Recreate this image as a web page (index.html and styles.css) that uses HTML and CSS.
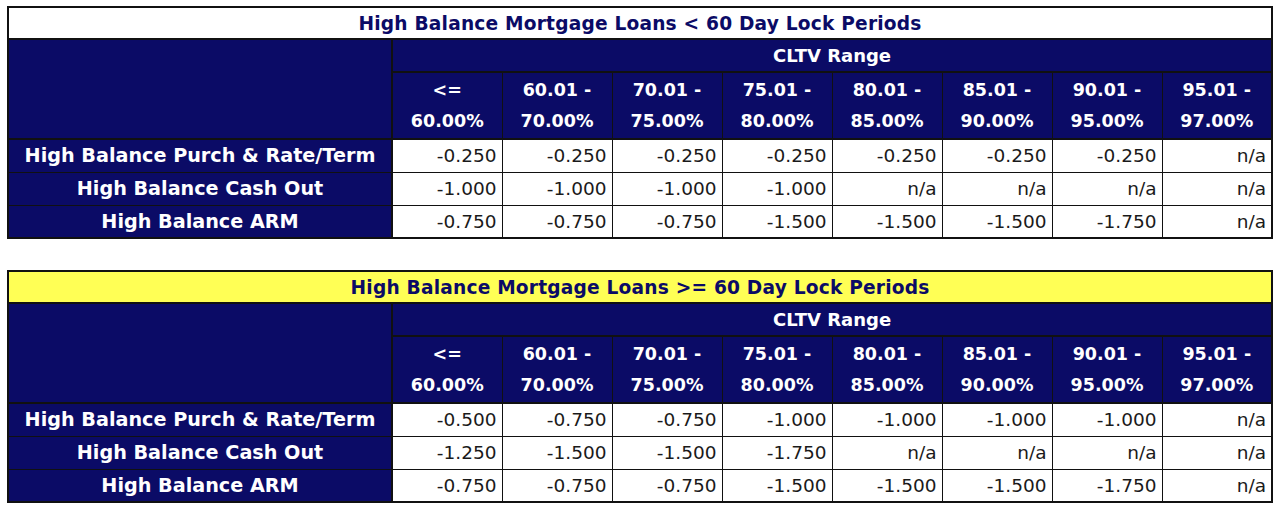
FILE: index.html
```html
<!DOCTYPE html>
<html>
<head>
<meta charset="utf-8">
<link rel="stylesheet" href="styles.css">
</head>
<body>
<div class="page">
  <table class="grid">
    <colgroup><col class="c-label"><col class="c-val"><col class="c-val"><col class="c-val"><col class="c-val"><col class="c-val"><col class="c-val"><col class="c-val"><col class="c-val"></colgroup>
    <tr class="r-title"><th colspan="9" class="title">High Balance Mortgage Loans &lt; 60 Day Lock Periods</th></tr>
    <tr class="r-range"><th rowspan="2" class="corner"></th><th colspan="8" class="range">CLTV Range</th></tr>
    <tr class="r-head"><th class="hd">&lt;=<br>60.00%</th><th class="hd">60.01 -<br>70.00%</th><th class="hd">70.01 -<br>75.00%</th><th class="hd">75.01 -<br>80.00%</th><th class="hd">80.01 -<br>85.00%</th><th class="hd">85.01 -<br>90.00%</th><th class="hd">90.01 -<br>95.00%</th><th class="hd">95.01 -<br>97.00%</th></tr>
    <tr class="r-data"><th class="lbl">High Balance Purch &amp; Rate/Term</th><td>-0.250</td><td>-0.250</td><td>-0.250</td><td>-0.250</td><td>-0.250</td><td>-0.250</td><td>-0.250</td><td>n/a</td></tr>
    <tr class="r-data"><th class="lbl">High Balance Cash Out</th><td>-1.000</td><td>-1.000</td><td>-1.000</td><td>-1.000</td><td>n/a</td><td>n/a</td><td>n/a</td><td>n/a</td></tr>
    <tr class="r-data"><th class="lbl">High Balance ARM</th><td>-0.750</td><td>-0.750</td><td>-0.750</td><td>-1.500</td><td>-1.500</td><td>-1.500</td><td>-1.750</td><td>n/a</td></tr>
  </table>

  <table class="grid">
    <colgroup><col class="c-label"><col class="c-val"><col class="c-val"><col class="c-val"><col class="c-val"><col class="c-val"><col class="c-val"><col class="c-val"><col class="c-val"></colgroup>
    <tr class="r-title"><th colspan="9" class="title yellow">High Balance Mortgage Loans &gt;= 60 Day Lock Periods</th></tr>
    <tr class="r-range"><th rowspan="2" class="corner"></th><th colspan="8" class="range">CLTV Range</th></tr>
    <tr class="r-head"><th class="hd">&lt;=<br>60.00%</th><th class="hd">60.01 -<br>70.00%</th><th class="hd">70.01 -<br>75.00%</th><th class="hd">75.01 -<br>80.00%</th><th class="hd">80.01 -<br>85.00%</th><th class="hd">85.01 -<br>90.00%</th><th class="hd">90.01 -<br>95.00%</th><th class="hd">95.01 -<br>97.00%</th></tr>
    <tr class="r-data"><th class="lbl">High Balance Purch &amp; Rate/Term</th><td>-0.500</td><td>-0.750</td><td>-0.750</td><td>-1.000</td><td>-1.000</td><td>-1.000</td><td>-1.000</td><td>n/a</td></tr>
    <tr class="r-data"><th class="lbl">High Balance Cash Out</th><td>-1.250</td><td>-1.500</td><td>-1.500</td><td>-1.750</td><td>n/a</td><td>n/a</td><td>n/a</td><td>n/a</td></tr>
    <tr class="r-data"><th class="lbl">High Balance ARM</th><td>-0.750</td><td>-0.750</td><td>-0.750</td><td>-1.500</td><td>-1.500</td><td>-1.500</td><td>-1.750</td><td>n/a</td></tr>
  </table>
</div>
</body>
</html>
```
FILE: styles.css
```css
html, body {
  margin: 0;
  padding: 0;
  background: #ffffff;
}
.page {
  padding: 6px 9px 0 7px;
  display: flex;
  flex-direction: column;
  gap: 31px;
  font-family: "DejaVu Sans", sans-serif;
}
.grid {
  border-collapse: collapse;
  table-layout: fixed;
  width: 1264px;
  border: 2px solid #111111;
}
.c-label { width: 384px; }
.c-val { width: 110px; }
th, td {
  padding: 0;
}
.r-title { height: 32px; }
.r-range { height: 33px; }
.r-head { height: 67px; }
.r-data { height: 33px; }
.title {
  background: #ffffff;
  color: #0b0b66;
  font-size: 18.6px;
  font-weight: bold;
  text-align: center;
  border-bottom: 2px solid #111111;
  letter-spacing: 0.2px;
}
.title.yellow { background: #ffff55; }
.corner {
  background: #0b0b66;
  border-right: 2px solid #111111;
  border-bottom: 2px solid #111111;
}
.range, .hd, .lbl {
  background: #0b0b66;
  color: #ffffff;
  font-weight: bold;
  font-size: 17.5px;
  text-align: center;
}
.range {
  border-bottom: 2px solid #111111;
  font-size: 18px;
}
.hd {
  line-height: 31px;
  border-left: 1px solid #111111;
  border-bottom: 2px solid #111111;
}
.lbl {
  border-top: 1px solid #111111;
  border-right: 2px solid #111111;
  font-size: 19.2px;
}
td {
  text-align: right;
  padding-right: 5px;
  font-size: 18.5px;
  color: #1a1a1a;
  border: 1px solid #111111;
  background: #ffffff;
}
```
